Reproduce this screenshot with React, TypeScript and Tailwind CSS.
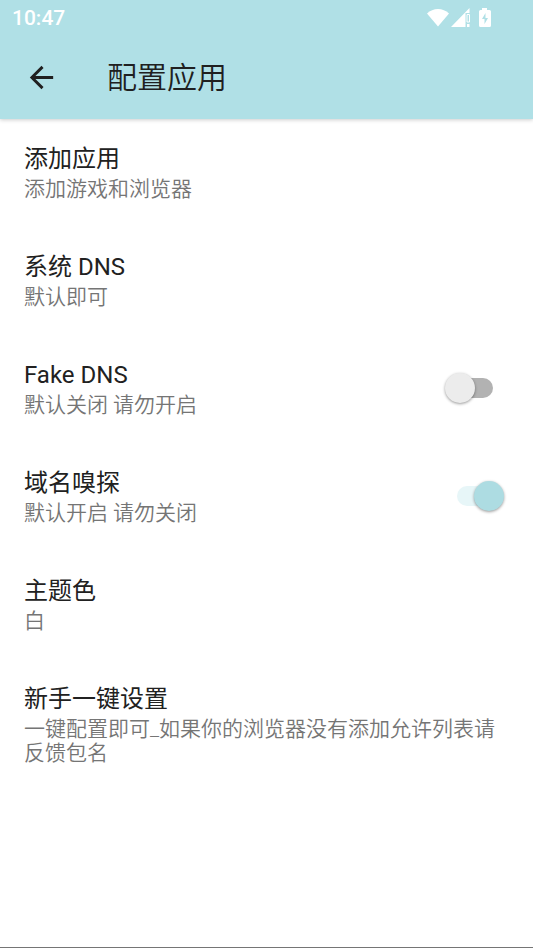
import { useState } from "react";

type Setting = {
  id: string;
  title: string;
  summary: string;
  toggle?: boolean;
};

const settings: Setting[] = [
  { id: "apps", title: "添加应用", summary: "添加游戏和浏览器" },
  { id: "dns", title: "系统 DNS", summary: "默认即可" },
  {
    id: "fake-dns",
    title: "Fake DNS",
    summary: "默认关闭 请勿开启",
    toggle: true,
  },
  {
    id: "sniffing",
    title: "域名嗅探",
    summary: "默认开启 请勿关闭",
    toggle: true,
  },
  { id: "theme", title: "主题色", summary: "白" },
  {
    id: "quick-setup",
    title: "新手一键设置",
    summary: "一键配置即可_如果你的浏览器没有添加允许列表请反馈包名",
  },
];

function StatusBar() {
  return (
    <div className="flex h-9 items-center justify-between pr-10 pl-3 text-white">
      <span className="text-[21px] leading-6 font-medium">10:47</span>
      <div className="flex items-center">
        <svg width="24" height="20" viewBox="0 0 24 20" fill="currentColor">
          <path d="M11 18.500 0 5.500C6-.5 16-.5 22 5.500Z" />
        </svg>
        <svg width="22" height="20" viewBox="0 0 22 20" fill="currentColor">
          <path d="M18.500 0v5h-4v14H0Z" />
          <path d="M16 6.500h2.500v7.500H16z" fill="none" stroke="currentColor" />
          <path d="M16 16h2.500v3H16z" />
        </svg>
        <svg
          className="ml-1"
          width="16"
          height="20"
          viewBox="0 0 16 20"
          fill="currentColor"
        >
          <path
            fillRule="evenodd"
            d="M5 0h5v2h2.500q1.500 0 1.500 1.500v14q0 1.500-1.500 1.500h-9Q2 19 2 17.500v-14Q2 2 3.500 2H5ZM8.500 5l-3.500 6h2.500v5L11 10H8.500Z"
          />
        </svg>
      </div>
    </div>
  );
}

function AppBar() {
  return (
    <header className="relative bg-[#b0e0e6] shadow-[0_1px_4px_rgba(0,0,0,0.2)]">
      <StatusBar />
      <div className="flex h-[83px] items-center pl-6">
        <button type="button" aria-label="返回" className="text-[#202020]">
          <svg width="35" height="35" viewBox="0 0 24 24" fill="currentColor">
            <path d="M20 11H7.830l5.590-5.590L12 4l-8 8 8 8 1.410-1.410L7.830 13H20v-2z" />
          </svg>
        </button>
        <h1 className="ml-12 text-[30px] leading-10 font-[350] text-[#202020]">
          配置应用
        </h1>
      </div>
    </header>
  );
}

function RowText({ setting }: { setting: Setting }) {
  return (
    <span className="flex min-w-0 flex-1 flex-col gap-0.5">
      <span className="text-2xl leading-8 text-[#212121]">{setting.title}</span>
      <span className="text-[21px] leading-6 font-[350] text-[#757575]">
        {setting.summary}
      </span>
    </span>
  );
}

export default function App() {
  const [enabled, setEnabled] = useState<Record<string, boolean>>({
    sniffing: true,
  });

  return (
    <div className="flex min-h-screen flex-col border-b border-[#757575] bg-white font-['Roboto','Noto_Sans_CJK_SC',sans-serif]">
      <AppBar />
      <main className="flex flex-col">
        {settings.map((setting) =>
          setting.toggle ? (
            <label
              key={setting.id}
              htmlFor={setting.id}
              className="flex items-center pt-6 pr-10 pb-[26px] pl-6"
            >
              <RowText setting={setting} />
              <input
                id={setting.id}
                type="checkbox"
                role="switch"
                checked={!!enabled[setting.id]}
                onChange={(e) =>
                  setEnabled({ ...enabled, [setting.id]: e.target.checked })
                }
                className="relative h-5 w-9 appearance-none rounded-full bg-[#b2b2b2] before:absolute before:-top-[5px] before:-left-3 before:size-[30px] before:rounded-full before:bg-[#ececec] before:shadow-[0_1px_3px_rgba(0,0,0,0.4)] checked:bg-[#e7f6f8] checked:before:left-[17px] checked:before:bg-[#addce2]"
              />
            </label>
          ) : (
            <button
              key={setting.id}
              type="button"
              className="flex items-center pt-6 pr-5 pb-[26px] pl-6 text-left"
            >
              <RowText setting={setting} />
            </button>
          ),
        )}
      </main>
    </div>
  );
}
